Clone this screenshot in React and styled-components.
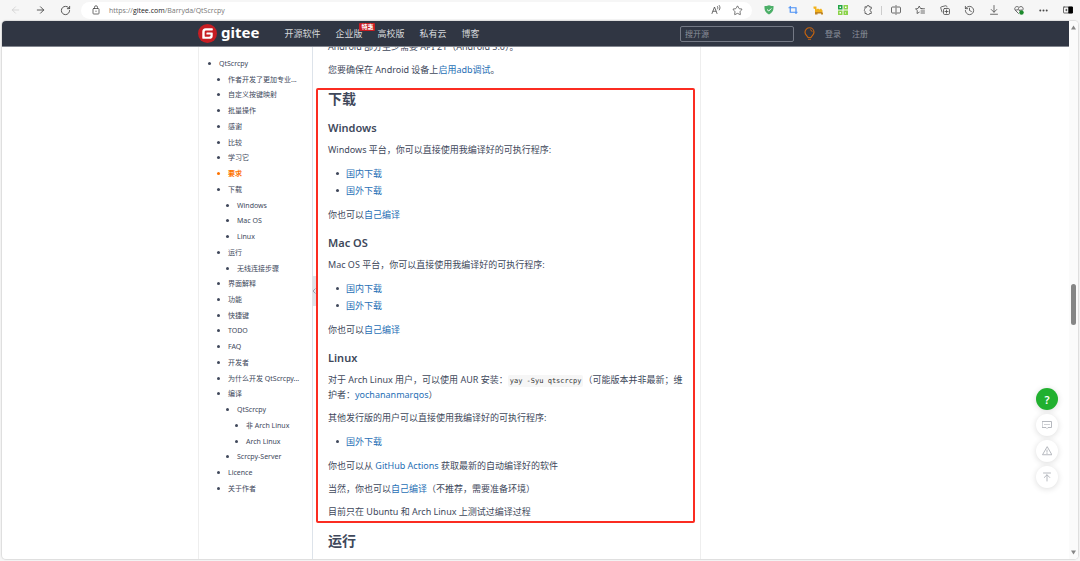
import React, { useState } from "react";
import styled, { createGlobalStyle, css } from "styled-components";
import { ArrowLeft, ArrowRight, Ellipsis, History, RotateCw, Star } from "lucide-react";

const GlobalStyle = createGlobalStyle`
  * {
    box-sizing: border-box;
  }

  body {
    margin: 0;
    background-color: #f6f6f6;
    color: #40485b;
    font-family: "Noto Sans", "Noto Sans CJK SC", sans-serif;
    font-size: 9px;
  }

  button {
    padding: 0;
    border: 0;
    background: none;
    color: inherit;
    font: inherit;
    cursor: pointer;
  }
`;

const Browser = styled.div`
  display: flex;
  flex-direction: column;
  height: 100vh;
`;

const Toolbar = styled.div`
  display: flex;
  align-items: center;
  height: 21px;
  padding: 0 6px 1px 10px;
  color: #555;
`;

const NavButtons = styled.div`
  display: flex;
  justify-content: space-between;
  width: 61px;
  margin-right: 10px;
`;

const IconButton = styled.button`
  display: flex;
  align-items: center;
  justify-content: center;
  width: 11px;
  height: 16px;
  flex-shrink: 0;
  color: ${(props) => (props.disabled ? "#ccc" : "#4a4a4a")};
`;

const AddressBar = styled.form`
  display: flex;
  align-items: center;
  flex: 1;
  gap: 8px;
  height: 17px;
  padding: 0 9px;
  border-radius: 9px;
  background-color: #fff;
`;

const Address = styled.div`
  flex: 1;
  color: #777;
  font-family: "Open Sans", sans-serif;
  font-size: 7px;
`;

const Host = styled.span`
  color: #222;
`;

const AddressActions = styled.div`
  display: flex;
  gap: 11px;
  color: #777;
`;

const Extensions = styled.div`
  display: flex;
  justify-content: space-between;
  width: 110px;
  margin-left: 11px;
`;

const Divider = styled.div`
  width: 1px;
  height: 9px;
  margin: 0 8px;
  background-color: #ccc;
`;

const BrowserActions = styled.div`
  display: flex;
  justify-content: space-between;
  width: 184px;
`;

const Page = styled.div`
  position: relative;
  display: flex;
  flex: 1;
  min-height: 0;
  margin: 0 2px 2px;
  overflow: hidden;
  border-radius: 4px;
  background-color: #fff;
  box-shadow: 0 0 1px 1px #ddd;
`;

const Site = styled.div`
  display: flex;
  flex-direction: column;
  flex: 1;
  min-width: 0;
`;

const Header = styled.header`
  position: relative;
  z-index: 1;
  flex-shrink: 0;
  border-bottom: 1px solid #82868f;
  background-color: #303643;
`;

const Container = styled.div`
  display: flex;
  width: 100%;
  max-width: 675px;
  margin: 0 auto;
`;

const HeaderContainer = styled(Container)`
  align-items: center;
  height: 25px;
`;

const Logo = styled.a`
  display: flex;
  align-items: center;
  gap: 4px;
  margin-right: 25px;
  color: #fff;
  font-family: "Noto Sans", sans-serif;
  font-size: 15px;
  font-weight: 700;
  line-height: 20px;
  text-decoration: none;
`;

const LogoName = styled.span`
  padding-bottom: 4px;
`;

const Menu = styled.nav`
  display: flex;
  gap: 15px;
`;

const MenuLink = styled.a`
  position: relative;
  color: #d6d8dc;
  font-size: 9px;
  line-height: 14px;
  white-space: nowrap;
  text-decoration: none;
`;

const Badge = styled.span`
  position: absolute;
  top: -4px;
  right: -13px;
  padding: 0 2px;
  border-radius: 1px;
  background-color: #c71d23;
  color: #fff;
  font-size: 6px;
  font-weight: 700;
  line-height: 8px;
`;

const Search = styled.input`
  width: 114px;
  height: 16px;
  margin: 0 10px 0 auto;
  padding: 0 4px;
  border: 1px solid #747985;
  border-radius: 2px;
  outline: none;
  background-color: transparent;
  color: #fff;
  font-family: inherit;
  font-size: 8px;

  &::placeholder {
    color: #8a8f9a;
  }
`;

const Account = styled.div`
  display: flex;
  gap: 11px;
  margin: 0 5px 0 10px;
`;

const AccountLink = styled.a`
  color: #8c919c;
  font-size: 8px;
  line-height: 14px;
  text-decoration: none;
`;

const Content = styled.main`
  flex: 1;
  min-height: 0;
  overflow: hidden;
`;

const Columns = styled(Container)`
  height: 100%;
`;

const Sidebar = styled.aside`
  position: relative;
  width: 115px;
  flex-shrink: 0;
  padding: 9px 8px 0 20px;
  border-left: 1px solid #eee;
  border-right: 1px solid #dde3ea;
`;

const Contents = styled.ul`
  display: flex;
  flex-direction: column;
  justify-content: space-between;
  height: 440px;
  margin: 0;
  padding: 0;
  list-style: none;
`;

const Bullet = css`
  content: "";
  position: absolute;
  width: 3px;
  height: 3px;
  border-radius: 50%;
  background-color: currentColor;
`;

const ContentsItem = styled.li`
  position: relative;
  padding-left: ${(props) => props.$depth * 9}px;
  color: #40485b;
  font-size: 7px;
  line-height: 15px;
  white-space: nowrap;

  &::before {
    ${Bullet}
    top: 6px;
    left: ${(props) => props.$depth * 9 - 11}px;
  }

  ${(props) =>
    props.$active &&
    css`
      color: #fe7300;
      font-weight: 700;
    `}
`;

const ContentsLink = styled.a`
  color: inherit;
  text-decoration: none;
`;

const Collapse = styled.button`
  position: absolute;
  top: 229px;
  right: -5px;
  display: flex;
  align-items: center;
  width: 5px;
  height: 30px;
  background-color: #dfe3e8;
  color: #9aa1ad;
`;

const Article = styled.article`
  width: 388px;
  min-width: 0;
  height: 100%;
  padding: 0 15px;
  border-right: 1px solid #eee;
`;

const Scrolled = styled.div`
  display: flex;
  flex-direction: column;
  margin-top: -8px;
`;

const Section = styled.section`
  position: relative;
  display: flex;
  flex-direction: column;
`;

const Highlight = styled.div`
  position: absolute;
  top: 3px;
  right: -10px;
  bottom: 4px;
  left: -12px;
  border: 2px solid #fb2c21;
  border-radius: 2px;
  pointer-events: none;
`;

const Title = styled.h2`
  margin: 4px 0 6px;
  font-size: 14px;
  font-weight: 700;
  line-height: 20px;
`;

const Subtitle = styled.h3`
  margin: 4px 0 6px;
  font-size: 11px;
  font-weight: 600;
  line-height: 17px;
`;

const Paragraph = styled.p`
  margin: 0 0 8px;
  line-height: 15px;
`;

const Downloads = styled.ul`
  margin: 0 0 8px;
  padding-left: 18px;
  line-height: 17px;
  list-style: none;
`;

const DownloadItem = styled.li`
  position: relative;

  &::before {
    ${Bullet}
    top: 7px;
    left: -10px;
  }
`;

const Link = styled.a`
  color: #1f6fb5;
  text-decoration: none;
`;

const Code = styled.code`
  padding: 2px;
  border-radius: 2px;
  background-color: #f6f6f6;
  color: #333;
  font-family: "DejaVu Sans Mono", monospace;
  font-size: 7px;
  line-height: 10px;
`;

const Tools = styled.div`
  position: absolute;
  right: 20px;
  bottom: 71px;
  display: flex;
  flex-direction: column;
  gap: 4px;
`;

const ToolButton = styled.button`
  display: flex;
  align-items: center;
  justify-content: center;
  width: 22px;
  height: 22px;
  border-radius: 50%;
  background-color: ${(props) => (props.$primary ? "#21b02f" : "#fff")};
  color: ${(props) => (props.$primary ? "#fff" : "#a3a7af")};
  box-shadow: 0 1px 6px rgba(0, 0, 0, 0.14);
  font-size: 11px;
  font-weight: 600;
`;

const Scrollbar = styled.div`
  display: flex;
  flex-direction: column;
  align-items: center;
  width: 9px;
  padding: 4px 0;
  background-color: #fbfbfb;
`;

const Track = styled.div`
  flex: ${(props) => props.$grow};
`;

const Thumb = styled.div`
  width: 5px;
  height: 41px;
  border-radius: 3px;
  background-color: #868686;
`;

const menu = [
  { label: "开源软件" },
  { label: "企业版", badge: "特惠" },
  { label: "高校版" },
  { label: "私有云" },
  { label: "博客" },
];

const contents = [
  [0, "QtScrcpy"],
  [1, "作者开发了更加专业..."],
  [1, "自定义按键映射"],
  [1, "批量操作"],
  [1, "感谢"],
  [1, "比较"],
  [1, "学习它"],
  [1, "要求"],
  [1, "下载"],
  [2, "Windows"],
  [2, "Mac OS"],
  [2, "Linux"],
  [1, "运行"],
  [2, "无线连接步骤"],
  [1, "界面解释"],
  [1, "功能"],
  [1, "快捷键"],
  [1, "TODO"],
  [1, "FAQ"],
  [1, "开发者"],
  [1, "为什么开发 QtScrcpy..."],
  [1, "编译"],
  [2, "QtScrcpy"],
  [3, "非 Arch Linux"],
  [3, "Arch Linux"],
  [2, "Scrcpy-Server"],
  [1, "Licence"],
  [1, "关于作者"],
];

function Icon({ size = 10, children }) {
  return (
    <svg
      width={size}
      height={size}
      viewBox="0 0 20 20"
      fill="none"
      stroke="currentColor"
      strokeWidth="1.6"
      strokeLinecap="round"
      strokeLinejoin="round"
      aria-hidden="true"
    >
      {children}
    </svg>
  );
}

function GiteeMark() {
  return (
    <svg width="19" height="19" viewBox="0 0 24 24" aria-hidden="true">
      <circle cx="12" cy="12" r="12" fill="#c71d23" />
      <path
        fill="#fff"
        d="M18.1 5.3H9.8a4.4 4.4 0 0 0-4.4 4.5v8.3c0 .3.3.6.6.6h8.6a4 4 0 0 0 4-4v-3.4a.6.6 0 0 0-.6-.6h-6.8a.6.6 0 0 0-.6.6v1.5c0 .3.3.6.6.6h4.1c.4 0 .6.3.6.6v.3c0 1-.8 1.7-1.7 1.7H9a.6.6 0 0 1-.6-.6V10c0-1 .8-1.8 1.8-1.8h7.9c.3 0 .6-.2.6-.5V5.9a.6.6 0 0 0-.6-.6z"
      />
    </svg>
  );
}

function BrowserToolbar() {
  return (
    <Toolbar>
      <NavButtons>
        <IconButton aria-label="后退" disabled>
          <ArrowLeft size={12} strokeWidth={1.6} />
        </IconButton>
        <IconButton aria-label="前进">
          <ArrowRight size={12} strokeWidth={2} />
        </IconButton>
        <IconButton aria-label="刷新">
          <RotateCw size={11} strokeWidth={2} />
        </IconButton>
      </NavButtons>
      <AddressBar>
        <IconButton type="button" aria-label="站点信息">
          <Icon size={10}>
            <rect x="4" y="7" width="12" height="11" rx="1.5" />
            <path d="M7 7V4.500a3 3 0 0 1 6 0V7M10 12v1" />
          </Icon>
        </IconButton>
        <Address>
          https://<Host>gitee.com</Host>/Barryda/QtScrcpy
        </Address>
        <AddressActions>
          <IconButton type="button" aria-label="朗读">
            <Icon>
              <path d="M2 17 7 4l5 13M4 12.500h6M13 3c1 1.500 1 3.500 0 5M16.500 1c2 3 2 6 0 9" />
            </Icon>
          </IconButton>
          <IconButton type="button" aria-label="收藏">
            <Star size={11} strokeWidth={1.6} />
          </IconButton>
        </AddressActions>
      </AddressBar>
      <Extensions>
        <IconButton aria-label="防护">
          <svg width="10" height="10" viewBox="0 0 20 20" aria-hidden="true">
            <path
              fill="#4caf68"
              d="M1 2c4 .8 6-.8 9-1.500 3 .7 5 2.300 9 1.500.5 9-2 13-9 17C3 15 .5 11 1 2z"
            />
            <path d="m6 9 3.500 3L14.500 7" fill="none" stroke="#fff" strokeWidth="2" />
          </svg>
        </IconButton>
        <IconButton aria-label="截图">
          <svg width="10" height="10" viewBox="0 0 20 20" aria-hidden="true">
            <path
              d="M1 5.500h15V18M4.500 2v12.500H19"
              fill="none"
              stroke="#4a90f5"
              strokeWidth="2.400"
            />
          </svg>
        </IconButton>
        <IconButton aria-label="骆驼">
          <svg width="10" height="9" viewBox="0 0 20 18" aria-hidden="true">
            <path fill="#f2b21b" d="M1 1h6v6l3-2 3 2 3-2 3 4v4H4V6L1 5z" />
            <path fill="#c08524" d="M4 12h15v2h1v3h-4v-2H9v2H4z" />
          </svg>
        </IconButton>
        <IconButton aria-label="二维码">
          <svg width="10" height="10" viewBox="0 0 20 20" aria-hidden="true">
            <path fill="#22a447" d="M0 0h9v9H0z" />
            <path fill="#8bd34a" d="M11 0h9v9h-9zM0 11h9v9H0zM11 11h9v9h-9z" />
            <path fill="#fff" d="M3 3h3v3H3zM14 3h3v3h-3zM3 14h3v3H3zM14 15h2v2h-2z" />
          </svg>
        </IconButton>
        <IconButton aria-label="扩展">
          <Icon>
            <path d="M7 4a3 3 0 0 1 6 0h3.500v4a2.500 2.500 0 0 0 0 5v4H13a3 3 0 0 1-6 0H4v-4a3 3 0 0 1 0-5V4z" />
          </Icon>
        </IconButton>
      </Extensions>
      <Divider />
      <BrowserActions>
        <IconButton aria-label="分屏">
          <Icon>
            <path d="M8 4H3a2 2 0 0 0-2 2v8a2 2 0 0 0 2 2h5M12 4h5a2 2 0 0 1 2 2v8a2 2 0 0 1-2 2h-5M10 1v18" />
          </Icon>
        </IconButton>
        <IconButton aria-label="收藏夹">
          <Icon>
            <path d="M14 7h-3L8.500 2 6 7l-5 .8L4.700 11 4 17l4.500-2.500M13 7.500h6M12 12h7M12 16h7" />
          </Icon>
        </IconButton>
        <IconButton aria-label="集锦">
          <Icon>
            <rect x="7" y="7" width="12" height="12" rx="2.500" />
            <path d="M13 10v6M10 13h6M4 14 1.500 6A2 2 0 0 1 3 3.500l8-2A2 2 0 0 1 13.500 3l.3 1" />
          </Icon>
        </IconButton>
        <IconButton aria-label="历史记录">
          <History size={11} strokeWidth={1.8} />
        </IconButton>
        <IconButton aria-label="下载">
          <Icon>
            <path d="M10 1v13M4.500 9l5.500 5.500L15.500 9M3 18.500h14" />
          </Icon>
        </IconButton>
        <IconButton aria-label="浏览器健康">
          <Icon>
            <path d="M9 17 2.500 10.500C-1 6 5 0 10 5c5-5 11 1 7.500 5M3 10h4l2-3 2 5 1.500-2H16" />
            <circle cx="15" cy="15" r="4.500" fill="#1c8a2c" stroke="none" />
          </Icon>
        </IconButton>
        <IconButton aria-label="更多">
          <Ellipsis size={11} strokeWidth={2.4} />
        </IconButton>
        <IconButton aria-label="侧边栏">
          <Icon>
            <rect x="1" y="4" width="18" height="12" rx="1" />
            <path d="M12 4h7v12h-7z" fill="#000" stroke="#000" />
            <path d="M5 10h3M7 8.500v3" />
          </Icon>
        </IconButton>
      </BrowserActions>
    </Toolbar>
  );
}

function SiteHeader() {
  return (
    <Header>
      <HeaderContainer>
        <Logo href="#">
          <GiteeMark />
          <LogoName>gitee</LogoName>
        </Logo>
        <Menu>
          {menu.map((item) => (
            <MenuLink key={item.label} href="#">
              {item.label}
              {item.badge && <Badge>{item.badge}</Badge>}
            </MenuLink>
          ))}
        </Menu>
        <Search type="search" placeholder="搜开源" aria-label="搜开源" />
        <svg width="11" height="13" viewBox="0 0 22 26" fill="none" aria-hidden="true">
          <path
            d="M8 21c-1-3-6-5-6-10.500a9 9 0 0 1 18 0C20 16 15 18 14 21z"
            stroke="#c4630f"
            strokeWidth="2.400"
          />
          <path d="M12 5.500c2.500.4 4 2 4.200 4.200M8 24.500h6" stroke="#c4630f" strokeWidth="2" />
        </svg>
        <Account>
          <AccountLink href="#">登录</AccountLink>
          <AccountLink href="#">注册</AccountLink>
        </Account>
      </HeaderContainer>
    </Header>
  );
}

function Platform({ name }) {
  return (
    <>
      <Subtitle>{name}</Subtitle>
      <Paragraph>{name} 平台，你可以直接使用我编译好的可执行程序:</Paragraph>
      <Downloads>
        <DownloadItem>
          <Link href="#">国内下载</Link>
        </DownloadItem>
        <DownloadItem>
          <Link href="#">国外下载</Link>
        </DownloadItem>
      </Downloads>
      <Paragraph>
        你也可以<Link href="#">自己编译</Link>
      </Paragraph>
    </>
  );
}

function Readme() {
  return (
    <Article>
      <Scrolled>
        <Paragraph>Android 部分至少需要 API 21（Android 5.0）。</Paragraph>
        <Paragraph>
          您要确保在 Android 设备上<Link href="#">启用adb调试</Link>。
        </Paragraph>
        <Section>
          <Title>下载</Title>
          <Platform name="Windows" />
          <Platform name="Mac OS" />
          <Subtitle>Linux</Subtitle>
          <Paragraph>
            对于 Arch Linux 用户，可以使用 AUR 安装：<Code>yay -Syu qtscrcpy</Code>
            （可能版本并非最新；维护者：<Link href="#">yochananmarqos</Link>）
          </Paragraph>
          <Paragraph>其他发行版的用户可以直接使用我编译好的可执行程序:</Paragraph>
          <Downloads>
            <DownloadItem>
              <Link href="#">国外下载</Link>
            </DownloadItem>
          </Downloads>
          <Paragraph>
            你也可以从 <Link href="#">GitHub Actions</Link> 获取最新的自动编译好的软件
          </Paragraph>
          <Paragraph>
            当然，你也可以<Link href="#">自己编译</Link>（不推荐，需要准备环境）
          </Paragraph>
          <Paragraph>目前只在 Ubuntu 和 Arch Linux 上测试过编译过程</Paragraph>
          <Highlight />
        </Section>
        <Title>运行</Title>
      </Scrolled>
    </Article>
  );
}

function App() {
  const [active, setActive] = useState("要求");

  return (
    <Browser>
      <GlobalStyle />
      <BrowserToolbar />
      <Page>
        <Site>
          <SiteHeader />
          <Content>
            <Columns>
              <Sidebar>
                <Contents>
                  {contents.map(([depth, label], index) => (
                    <ContentsItem key={index} $depth={depth} $active={label === active}>
                      <ContentsLink href="#" onClick={() => setActive(label)}>
                        {label}
                      </ContentsLink>
                    </ContentsItem>
                  ))}
                </Contents>
                <Collapse aria-label="收起目录">
                  <svg width="4" height="6" viewBox="0 0 4 6" aria-hidden="true">
                    <path d="M3.500.5 1 3l2.500 2.500" fill="none" stroke="currentColor" />
                  </svg>
                </Collapse>
              </Sidebar>
              <Readme />
            </Columns>
          </Content>
        </Site>
        <Tools>
          <ToolButton $primary aria-label="帮助">
            ?
          </ToolButton>
          <ToolButton aria-label="评论">
            <Icon>
              <path d="M1 3h18v12h-7l-2 2-2-2H1zM5.500 9h1M9.500 9h1M13.500 9h1" />
            </Icon>
          </ToolButton>
          <ToolButton aria-label="举报">
            <Icon>
              <path d="M10 2 1 17.500h18zM10 8v4.500M10 15v.2" />
            </Icon>
          </ToolButton>
          <ToolButton aria-label="回到顶部">
            <Icon>
              <path d="M3 2h14M10 18V6M4.500 11 10 5.500l5.500 5.500" />
            </Icon>
          </ToolButton>
        </Tools>
        <Scrollbar>
          <svg width="5" height="5" viewBox="0 0 5 5" aria-hidden="true">
            <path d="M0 4.500 2.500.5 5 4.500z" fill="#868686" />
          </svg>
          <Track $grow={9} />
          <Thumb />
          <Track $grow={8} />
          <svg width="5" height="5" viewBox="0 0 5 5" aria-hidden="true">
            <path d="M0 .5 2.500 4.500 5 .5z" fill="#868686" />
          </svg>
        </Scrollbar>
      </Page>
    </Browser>
  );
}

export default App;
